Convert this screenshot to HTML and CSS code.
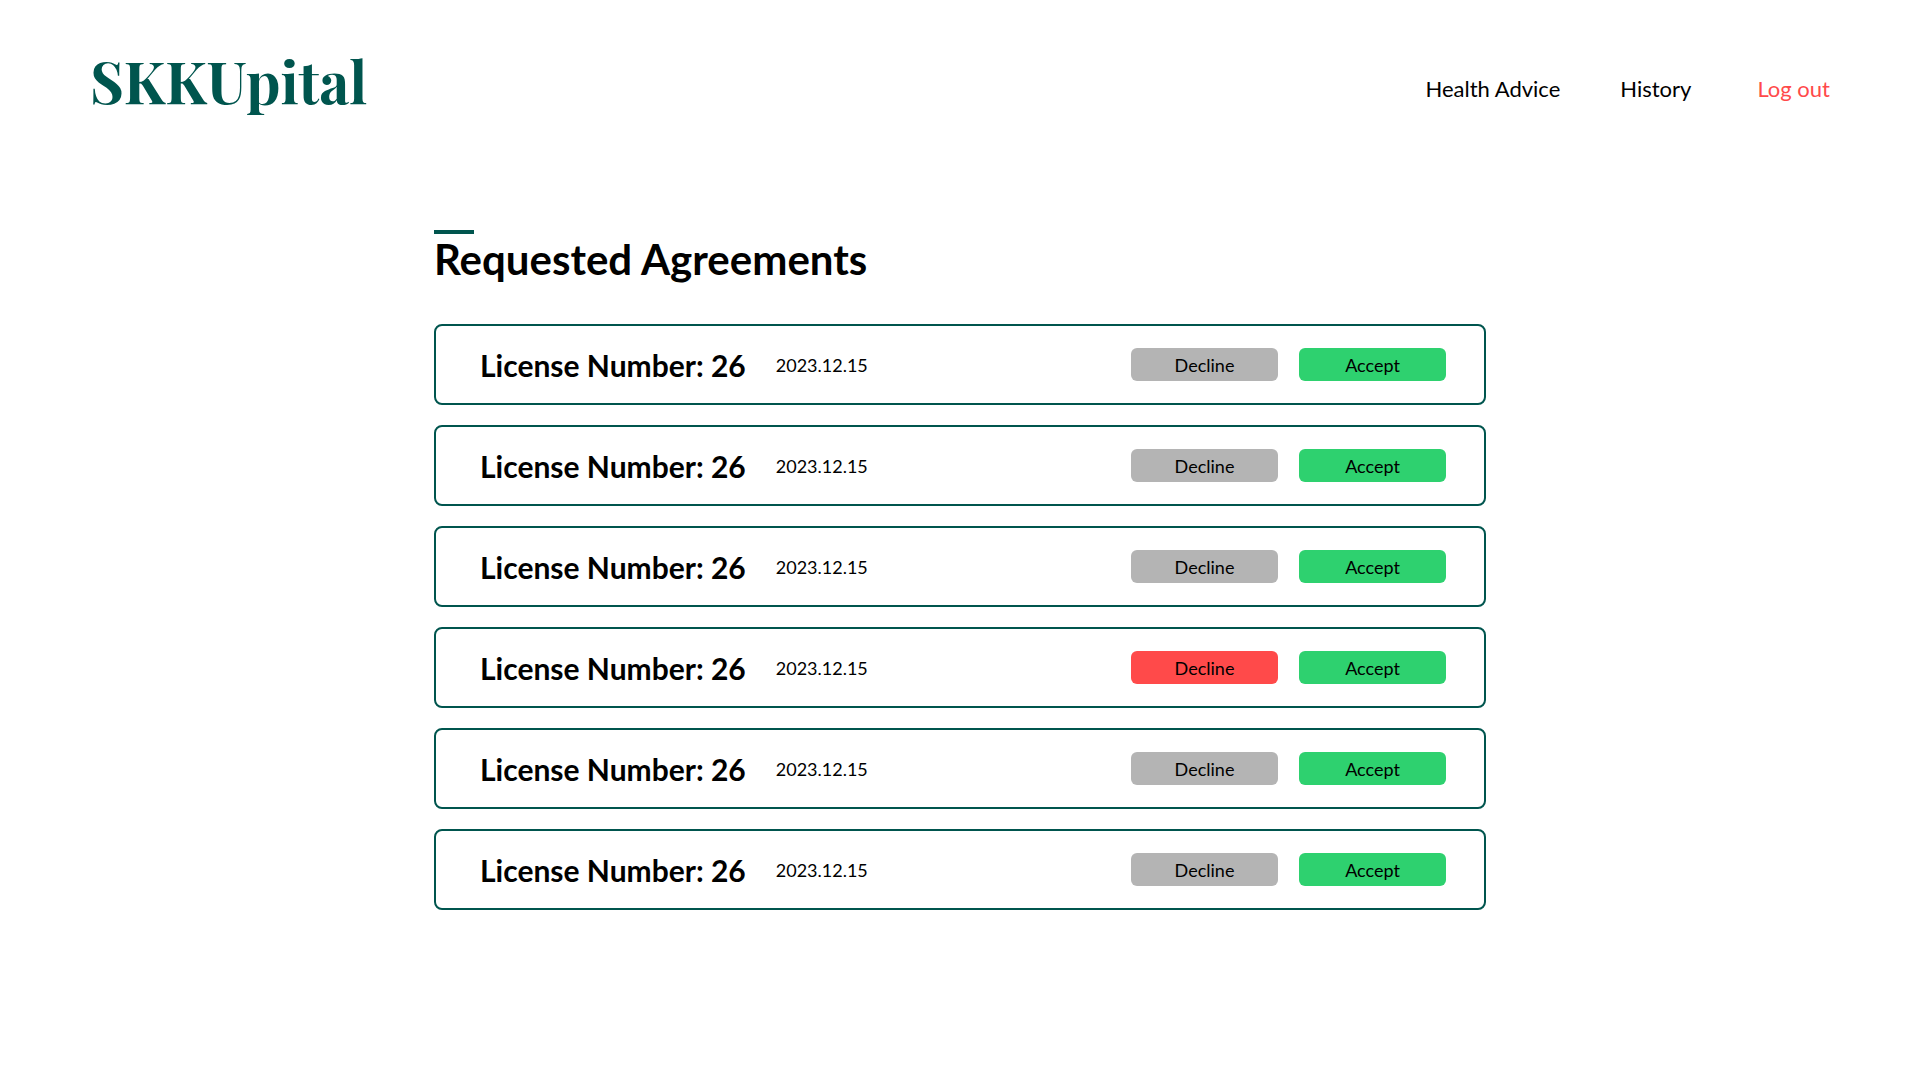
FILE: index.html
```html
<!DOCTYPE html>
<html lang="en">
<head>
<meta charset="utf-8">
<title>SKKUpital - Requested Agreements</title>
<link rel="stylesheet" href="styles.css">
</head>
<body>
<header class="site-header">
  <a class="logo" href="#">SKKUpital</a>
  <nav class="nav">
    <a href="#">Health Advice</a>
    <a href="#">History</a>
    <a class="logout" href="#">Log out</a>
  </nav>
</header>
<main class="content">
  <h1 class="title">Requested Agreements</h1>
  <ul class="requests">
    <li class="request"><h2>License Number: 26</h2><time datetime="2023-12-15">2023.12.15</time><button class="btn decline" type="button">Decline</button><button class="btn accept" type="button">Accept</button></li>
    <li class="request"><h2>License Number: 26</h2><time datetime="2023-12-15">2023.12.15</time><button class="btn decline" type="button">Decline</button><button class="btn accept" type="button">Accept</button></li>
    <li class="request"><h2>License Number: 26</h2><time datetime="2023-12-15">2023.12.15</time><button class="btn decline" type="button">Decline</button><button class="btn accept" type="button">Accept</button></li>
    <li class="request"><h2>License Number: 26</h2><time datetime="2023-12-15">2023.12.15</time><button class="btn decline active" type="button">Decline</button><button class="btn accept" type="button">Accept</button></li>
    <li class="request"><h2>License Number: 26</h2><time datetime="2023-12-15">2023.12.15</time><button class="btn decline" type="button">Decline</button><button class="btn accept" type="button">Accept</button></li>
    <li class="request"><h2>License Number: 26</h2><time datetime="2023-12-15">2023.12.15</time><button class="btn decline" type="button">Decline</button><button class="btn accept" type="button">Accept</button></li>
  </ul>
</main>
</body>
</html>
```
FILE: styles.css
```css
* { box-sizing: border-box; }
body {
  margin: 0;
  background: #fff;
  color: #000;
  font-family: Lato, sans-serif;
}
a { color: inherit; text-decoration: none; }
.site-header {
  display: flex;
  align-items: center;
  justify-content: space-between;
  min-height: 176px;
  padding: 0 90px;
}
.logo {
  margin-bottom: 16px;
  color: #00554e;
  font: bold 58px/80px "Playfair Display", "Liberation Serif", serif;
}
.nav {
  display: flex;
  gap: 60px;
  font-size: 22px;
}
.logout { margin-left: 6px; color: #ff4a4a; }
.content {
  max-width: 1052px;
  margin: 0 auto;
  padding-top: 54px;
}
.title {
  margin: 0 0 40px;
  font-size: 42px;
  line-height: 50px;
}
.title::before {
  content: "";
  display: block;
  width: 40px;
  height: 4px;
  background: #00554e;
}
.requests {
  display: grid;
  gap: 20px;
  margin: 0;
  padding: 0;
  list-style: none;
}
.request {
  display: flex;
  align-items: center;
  min-height: 81px;
  padding: 0 38px 0 44px;
  border: 2px solid #00554e;
  border-radius: 8px;
}
.request h2 { margin: 0 30px 0 0; font-size: 30px; }
.request time { margin-right: auto; font-size: 18px; }
.btn {
  width: 147px;
  height: 33px;
  padding: 0;
  border: 0;
  border-radius: 6px;
  color: #000;
  font: 18px Lato, sans-serif;
}
.decline { margin-right: 21px; background: #b4b4b4; }
.decline.active { background: #ff4a4a; }
.accept { background: #2ed16f; }
```
